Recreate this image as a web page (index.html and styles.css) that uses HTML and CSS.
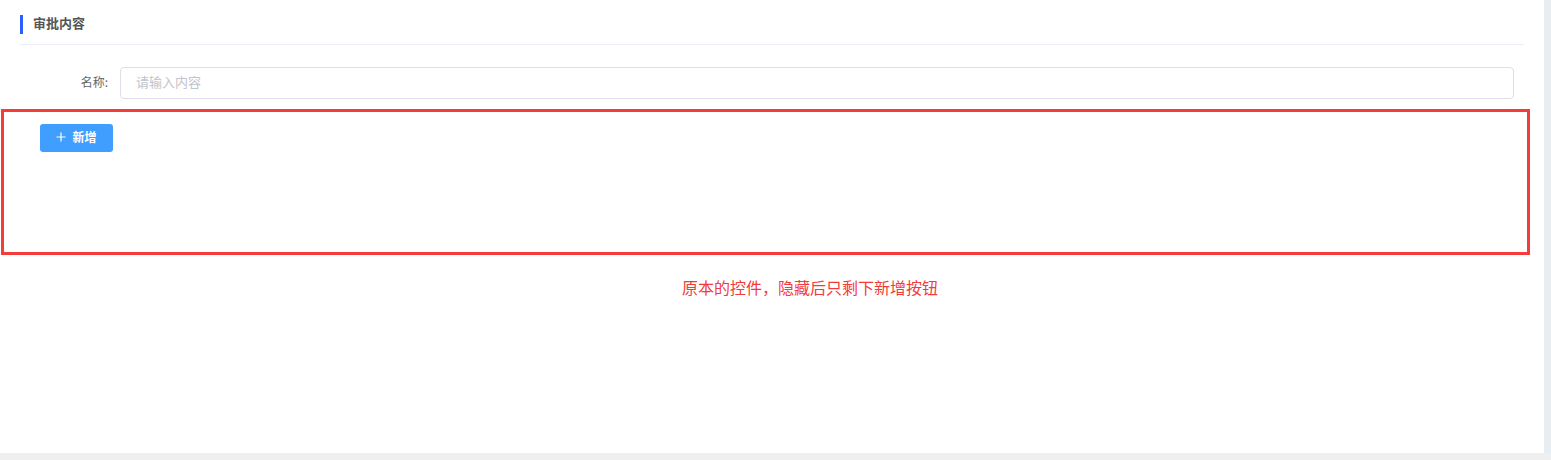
FILE: index.html
```html
<!DOCTYPE html>
<html lang="zh-CN">
<head>
    <meta charset="UTF-8">
    <meta name="viewport" content="width=device-width, initial-scale=1.0">
    <title>审批内容</title>
    <link rel="stylesheet" href="styles.css">
</head>
<body>
    <div class="layout">
        <main class="panel">
            <div class="section-title">
                <span class="title-bar"></span>
                <span class="title-text">审批内容</span>
            </div>

            <div class="form-row">
                <label class="form-label">名称:</label>
                <input class="form-input" type="text" placeholder="请输入内容">
            </div>

            <!-- annotation box around the hidden control -->
            <div class="mark-box">
                <button class="btn-add">
                    <svg class="btn-icon" viewBox="0 0 10 10" width="10" height="10">
                        <path d="M5 0.5V9.5M0.5 5H9.5" stroke="#fff" stroke-width="1.2" fill="none"/>
                    </svg>
                    新增
                </button>
            </div>

            <p class="mark-note">原本的控件，隐藏后只剩下新增按钮</p>
        </main>
        <div class="scroll-track"></div>
    </div>
</body>
</html>
```

FILE: styles.css
```css
html, body {
    margin: 0;
    padding: 0;
}

body {
    font-family: "Microsoft YaHei", "Noto Sans CJK SC", "Noto Sans", sans-serif;
    background: #efefef;
    color: #606266;
}

.layout {
    display: flex;
    height: 453px;
}

.panel {
    width: 1544px;
    background: #fff;
    box-sizing: border-box;
}

.scroll-track {
    width: 7px;
    background: #e8edf2;
}

/* section header */
.section-title {
    display: flex;
    align-items: flex-start;
    margin: 0 20px;
    padding: 15px 0 10px;
    border-bottom: 1px solid #ebeef5;
}

.title-bar {
    width: 3px;
    height: 19px;
    background: #2b5fff;
    margin-right: 10px;
}

.title-text {
    font-size: 13px;
    font-weight: bold;
    color: #555;
    line-height: 15px;
}

/* form */
.form-row {
    display: flex;
    align-items: center;
    margin: 22px 30px 0 0;
}

.form-label {
    width: 120px;
    padding: 0 12px 3px 0;
    text-align: right;
    font-size: 12px;
    color: #666;
    box-sizing: border-box;
    flex: none;
}

.form-input {
    flex: 1;
    height: 32px;
    box-sizing: border-box;
    border: 1px solid #dcdfe6;
    border-radius: 4px;
    padding: 0 15px 3px;
    font-family: inherit;
    font-size: 13px;
    color: #606266;
    outline: none;
}

.form-input::placeholder {
    color: #c0c4cc;
}

/* red annotation */
.mark-box {
    margin: 10px 14px 0 1px;
    height: 146px;
    box-sizing: border-box;
    border: 3px solid #f63b3b;
    padding: 12px 36px 0;
}

.btn-add {
    display: flex;
    align-items: center;
    justify-content: center;
    gap: 6px;
    width: 73px;
    height: 28px;
    padding: 0 0 3px;
    border: none;
    border-radius: 3px;
    background: #409eff;
    color: #fff;
    font-family: inherit;
    font-size: 12px;
    font-weight: bold;
    cursor: pointer;
}

.btn-icon {
    display: block;
}

.mark-note {
    margin: 22px 0 0 682px;
    font-size: 16px;
    line-height: 20px;
    color: #f23c3c;
}
```
